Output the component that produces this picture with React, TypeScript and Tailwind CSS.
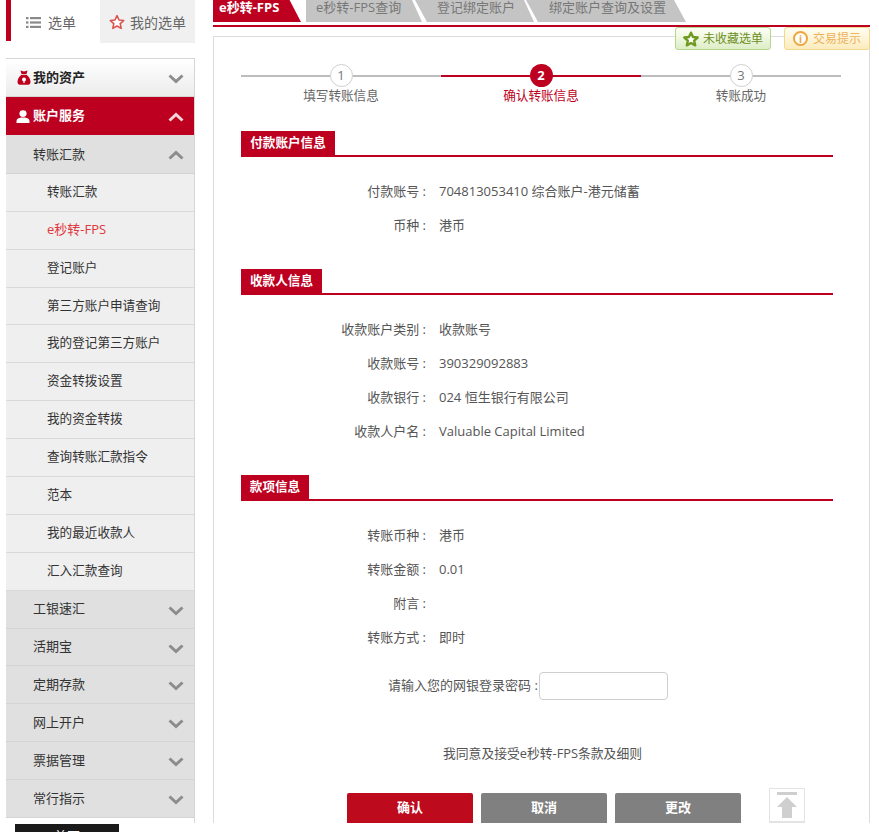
import React from 'react';

const font = "[font-family:'Open_Sans','Noto_Sans_CJK_SC',sans-serif]";

function Chevron({ up, color = '#8c8c8c' }: { up?: boolean; color?: string }) {
  return (
    <svg className={up ? 'mt-[1px]' : 'mt-[3px]'} width="16" height="10" viewBox="0 0 16 10" fill="none">
      <path d={up ? 'M1.5 8.5 L8 2.5 L14.5 8.5' : 'M1.5 1.5 L8 7.5 L14.5 1.5'} stroke={color} strokeWidth="3" />
    </svg>
  );
}

function MoneyBag() {
  return (
    <svg width="14" height="15" viewBox="0 0 14 15">
      <path d="M3.5 0.5 L7 1.5 L10.5 0.5 L9.5 4 L4.5 4 Z M4.5 4.8 L9.5 4.8 C12 6.5 13.5 9.5 13.5 12 C13.5 14 12 14.8 10.5 14.8 L3.5 14.8 C2 14.8 0.5 14 0.5 12 C0.5 9.5 2 6.5 4.5 4.8 Z" fill="#bd0020" />
      <circle cx="7" cy="9.5" r="2" fill="#fff" />
      <rect x="6.4" y="9.5" width="1.2" height="3.5" fill="#fff" />
    </svg>
  );
}

function UserIcon() {
  return (
    <svg width="14" height="13" viewBox="0 0 14 13" fill="#fff">
      <ellipse cx="7" cy="3.6" rx="3.6" ry="3.4" />
      <path d="M0.5 13 L0.5 11 C0.5 9 3 8 5 7.6 L9 7.6 C11 8 13.5 9 13.5 11 L13.5 13 Z" />
    </svg>
  );
}

function ListIcon() {
  return (
    <svg width="15" height="11" viewBox="0 0 15 11" fill="#8a8a8a">
      <rect x="0" y="0" width="2.5" height="2.2" />
      <rect x="4" y="0" width="11" height="2.2" />
      <rect x="0" y="4.4" width="2.5" height="2.2" />
      <rect x="4" y="4.4" width="11" height="2.2" />
      <rect x="0" y="8.8" width="2.5" height="2.2" />
      <rect x="4" y="8.8" width="11" height="2.2" />
    </svg>
  );
}

function StarIcon({ color, width = 2, size = 15 }: { color: string; width?: number; size?: number }) {
  return (
    <svg width={size} height={size} viewBox="0 0 24 24" fill="#fff">
      <path d="M12 2.5 L15 9 L22 9.8 L16.8 14.5 L18.3 21.5 L12 18 L5.7 21.5 L7.2 14.5 L2 9.8 L9 9 Z" stroke={color} strokeWidth={width} strokeLinejoin="round" />
    </svg>
  );
}

function Top({ label, open }: { label: string; open?: boolean }) {
  return (
    <div className="flex h-[37.9px] items-center justify-between border-b border-[#d4d4d4] bg-[#e0e0e0] pl-[27px] pr-[10px] text-[13px] text-[#333]">
      <span>{label}</span>
      <Chevron up={open} />
    </div>
  );
}

function Sub({ label, active }: { label: string; active?: boolean }) {
  return (
    <div className={`flex h-[37.9px] items-center border-b border-[#d9d9d9] bg-[#efefef] pl-[41px] ${active ? 'text-[13px] text-[#e0363c]' : 'text-[12.6px] text-[#333]'}`}>
      {label}
    </div>
  );
}

function Sidebar() {
  const subs = ['第三方账户申请查询', '我的登记第三方账户', '资金转拨设置', '我的资金转拨', '查询转账汇款指令', '范本', '我的最近收款人', '汇入汇款查询'];
  const tops = ['工银速汇', '活期宝', '定期存款', '网上开户', '票据管理', '常行指示'];
  return (
    <div className="ml-[6px] flex w-[189px] shrink-0 flex-col">
      <div className="flex h-[43px] shrink-0 text-[14px] text-[#666]">
        <div className="h-[41px] w-[5px] bg-[#bd0020]" />
        <div className="flex w-[89px] items-center gap-[7px] pt-[1px] pl-[15px]">
          <ListIcon />
          <span>选单</span>
        </div>
        <div className="flex w-[95px] items-center gap-[5px] bg-[#f0f0f0] pt-[1px] pl-[9px]">
          <StarIcon color="#d9544f" width={2.4} size={16} />
          <span>我的选单</span>
        </div>
      </div>
      <div className="mt-[15px] h-[765px] shrink-0 border-t border-r border-[#d6d6d6]">
        <div className="flex h-[38px] items-center justify-between border-b border-[#d4d4d4] bg-gradient-to-b from-white to-[#ececec] pl-[11px] pr-[10px] text-[13px] font-bold text-[#222]">
          <span className="flex items-center gap-[2px]"><MoneyBag />我的资产</span>
          <Chevron />
        </div>
        <div className="flex h-[38px] items-center justify-between bg-[#bd0020] pl-[10px] pr-[10px] text-[13px] font-bold text-white">
          <span className="flex items-center gap-[3px]"><UserIcon />账户服务</span>
          <Chevron up color="#f3d5da" />
        </div>
        <div className="bg-[#e0e0e0] pt-[1px]">
          <Top label="转账汇款" open />
        </div>
        <Sub label="转账汇款" />
        <Sub label="e秒转-FPS" active />
        <Sub label="登记账户" />
        {subs.map((s) => <Sub key={s} label={s} />)}
        {tops.map((t) => <Top key={t} label={t} />)}
      </div>
      <div className="mt-[1px] ml-[9px] flex h-[30px] w-[104px] shrink-0 justify-center bg-[#1a1a1a] pt-[3px] text-[13px] text-white">首页</div>
    </div>
  );
}

function Tabs() {
  return (
    <div className="flex h-[25px] items-start text-[13px] leading-none">
      <div className="flex h-[22px] w-[88px] items-center bg-[#bd0020] pl-[6px] pb-[7px] font-bold text-white [clip-path:polygon(0_0,87%_0,100%_100%,0_100%)]">
        e秒转-FPS
      </div>
      <div className="ml-[5px] flex h-[22px] w-[116px] items-center bg-[#c4c4c4] pl-[10px] pb-[7px] whitespace-nowrap text-[#777] [clip-path:polygon(0_0,calc(100%-10px)_0,100%_100%,0_100%)]">
        e秒转-FPS查询
      </div>
      <div className="-ml-[7px] flex h-[22px] w-[119px] items-center bg-[#c4c4c4] pl-[22px] pb-[7px] whitespace-nowrap text-[#777] [clip-path:polygon(0_0,calc(100%-10px)_0,100%_100%,12px_100%)]">
        登记绑定账户
      </div>
      <div className="-ml-[8px] flex h-[22px] w-[160px] items-center bg-[#c4c4c4] pl-[23px] pb-[7px] whitespace-nowrap text-[#777] [clip-path:polygon(0_0,calc(100%-12px)_0,100%_100%,12px_100%)]">
        绑定账户查询及设置
      </div>
    </div>
  );
}

function Step({ n, label, active }: { n: number; label: string; active?: boolean }) {
  return (
    <div className="relative flex w-[200px] shrink-0 flex-col items-center">
      <div className={`absolute top-[11px] left-0 h-[2px] w-full ${active ? 'bg-[#bd0020]' : 'bg-[#bdbdbd]'}`} />
      <div className={`relative flex h-[23px] w-[23px] items-center justify-center rounded-full text-[13px] ${active ? 'bg-[#bd0020] font-bold text-white' : 'border border-[#cfcfcf] bg-white text-[#777]'}`}>
        {n}
      </div>
      <div className={`text-[12.6px] leading-[18px] ${active ? 'text-[#bd0020]' : 'text-[#666]'}`}>{label}</div>
    </div>
  );
}

function Section({ title, width, rows }: { title: string; width: string; rows: [string, string][] }) {
  return (
    <div>
      <div className="border-b-2 border-[#bd0020]">
        <div className={`flex h-[24px] items-center justify-center bg-[#bd0020] text-[12.6px] font-bold text-white ${width}`}>{title}</div>
      </div>
      <div className="mt-[18px] flex flex-col">
        {rows.map(([k, v]) => (
          <div key={k} className="flex h-[34px] items-center text-[13px] text-[#555]">
            <span className="w-[187px] pr-[2px] text-right">{k} :</span>
            <span className="ml-[11px]">{v}</span>
          </div>
        ))}
      </div>
    </div>
  );
}

function Main() {
  return (
    <div className="ml-[18px] w-[657px] shrink-0">
      <Tabs />
      <div className="h-[2px] bg-[#bd0020]" />
      <div className="relative mt-[9px] h-[787px] border border-b-0 border-[#dcdcdc] pl-[27px] pr-[36px]">
        <div className="absolute -top-[10px] right-[-1px] flex gap-[13px]">
          <div className="flex h-[23px] w-[96px] items-center justify-center gap-[4px] rounded-[3px] border border-[#b5d68f] bg-gradient-to-b from-[#fdfff5] to-[#deeec7] text-[12px] text-[#6c8f1e]">
            <StarIcon color="#6f9a1f" width={3.6} size={16} />
            未收藏选单
          </div>
          <div className="flex h-[23px] w-[86px] items-center justify-center gap-[5px] rounded-[3px] border border-[#f0d98a] bg-gradient-to-b from-[#fffdf3] to-[#fbecbd] text-[12px] text-[#eeb25a]">
            <span className="flex h-[15px] w-[15px] items-center justify-center rounded-full border-2 border-[#eea63c] bg-white text-[10px] font-bold leading-none text-[#eea63c]">i</span>
            交易提示
          </div>
        </div>
        <div className="-mr-[7px] flex pt-[27px]">
          <Step n={1} label="填写转账信息" />
          <Step n={2} label="确认转账信息" active />
          <Step n={3} label="转账成功" />
        </div>
        <div className="mt-[26px] flex flex-col gap-[26px]">
          <Section title="付款账户信息" width="w-[94px]" rows={[['付款账号', '704813053410 综合账户-港元储蓄'], ['币种', '港币']]} />
          <Section title="收款人信息" width="w-[81px]" rows={[['收款账户类别', '收款账号'], ['收款账号', '390329092883'], ['收款银行', '024 恒生银行有限公司'], ['收款人户名', 'Valuable Capital Limited']]} />
          <Section title="款项信息" width="w-[68px]" rows={[['转账币种', '港币'], ['转账金额', '0.01'], ['附言', ''], ['转账方式', '即时']]} />
        </div>
        <div className="mt-[17px] flex items-center pl-[147px] text-[13px] text-[#555]">
          <span className="w-[151px] whitespace-nowrap">请输入您的网银登录密码 :</span>
          <input className="h-[28px] w-[129px] rounded-[4px] border border-[#cfcfcf] bg-white outline-none" />
        </div>
        <div className="mt-[44px] pl-[202px] text-[12.8px] leading-[18px] text-[#555]">我同意及接受e秒转-FPS条款及细则</div>
        <div className="mt-[26px] flex items-end pl-[106px] text-[13px] font-bold text-white">
          <button className="h-[30px] w-[126px] rounded-t-[2px] bg-[#bd0a1c]">确认</button>
          <button className="ml-[8px] h-[30px] w-[126px] rounded-t-[2px] bg-[#808080]">取消</button>
          <button className="ml-[8px] h-[30px] w-[126px] rounded-t-[2px] bg-[#808080]">更改</button>
          <div className="ml-[28px] flex h-[35px] w-[36px] items-center justify-center border border-b-2 border-[#e3e3e3]">
            <svg width="20" height="26" viewBox="0 0 20 26" fill="#cfcfcf">
              <rect x="0" y="0" width="20" height="3" />
              <path d="M10 5 L20 15 L15 15 L15 26 L5 26 L5 15 L0 15 Z" />
            </svg>
          </div>
        </div>
      </div>
    </div>
  );
}

export default function App() {
  return (
    <div className={`flex h-[832px] w-[879px] overflow-hidden bg-white ${font}`}>
      <Sidebar />
      <Main />
    </div>
  );
}
